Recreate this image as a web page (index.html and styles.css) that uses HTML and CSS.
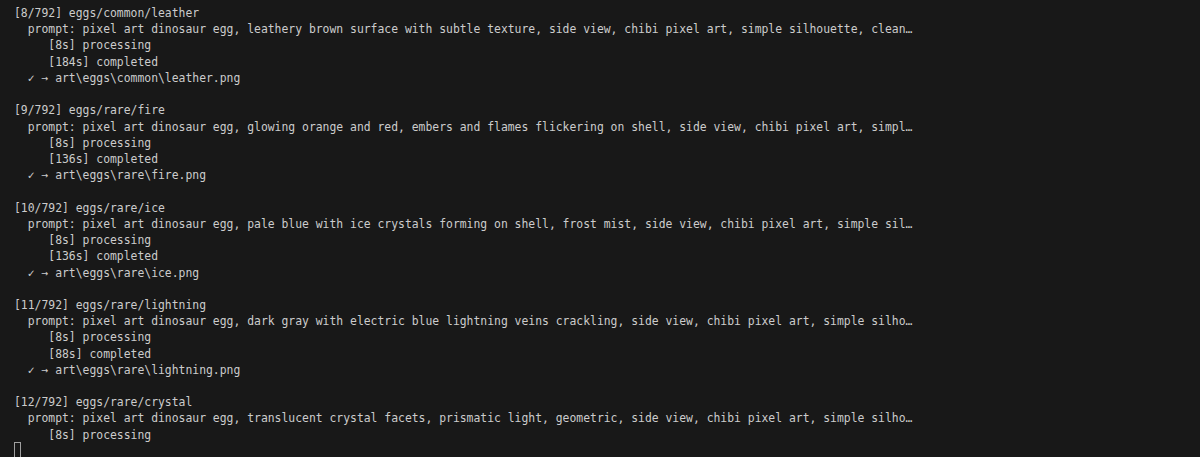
FILE: index.html
```html
<!DOCTYPE html>
<html>
<head>
<meta charset="utf-8">
<link rel="stylesheet" href="styles.css">
</head>
<body>
<main class="term">
<pre class="out">[8/792] eggs/common/leather
  prompt: pixel art dinosaur egg, leathery brown surface with subtle texture, side view, chibi pixel art, simple silhouette, clean…
     [8s] processing
     [184s] completed
  ✓ → art\eggs\common\leather.png

[9/792] eggs/rare/fire
  prompt: pixel art dinosaur egg, glowing orange and red, embers and flames flickering on shell, side view, chibi pixel art, simpl…
     [8s] processing
     [136s] completed
  ✓ → art\eggs\rare\fire.png

[10/792] eggs/rare/ice
  prompt: pixel art dinosaur egg, pale blue with ice crystals forming on shell, frost mist, side view, chibi pixel art, simple sil…
     [8s] processing
     [136s] completed
  ✓ → art\eggs\rare\ice.png

[11/792] eggs/rare/lightning
  prompt: pixel art dinosaur egg, dark gray with electric blue lightning veins crackling, side view, chibi pixel art, simple silho…
     [8s] processing
     [88s] completed
  ✓ → art\eggs\rare\lightning.png

[12/792] eggs/rare/crystal
  prompt: pixel art dinosaur egg, translucent crystal facets, prismatic light, geometric, side view, chibi pixel art, simple silho…
     [8s] processing
<span class="cursor"> </span></pre>
</main>
</body>
</html>
```

FILE: styles.css
```css
html, body {
  margin: 0;
  padding: 0;
  background: #181818;
  height: 100%;
  overflow: hidden;
}
.term {
  padding: 5px 0 0 14px;
}
.out {
  margin: 0;
  font-family: "DejaVu Sans Mono", "Liberation Mono", monospace;
  font-size: 11.4px;
  line-height: 16.22px;
  color: #cccccc;
  white-space: pre;
}
.cursor {
  display: inline-block;
  width: 5px;
  height: 17px;
  border: 1px solid #a0a0a0;
  vertical-align: top;
  margin-top: -1px;
}
```
